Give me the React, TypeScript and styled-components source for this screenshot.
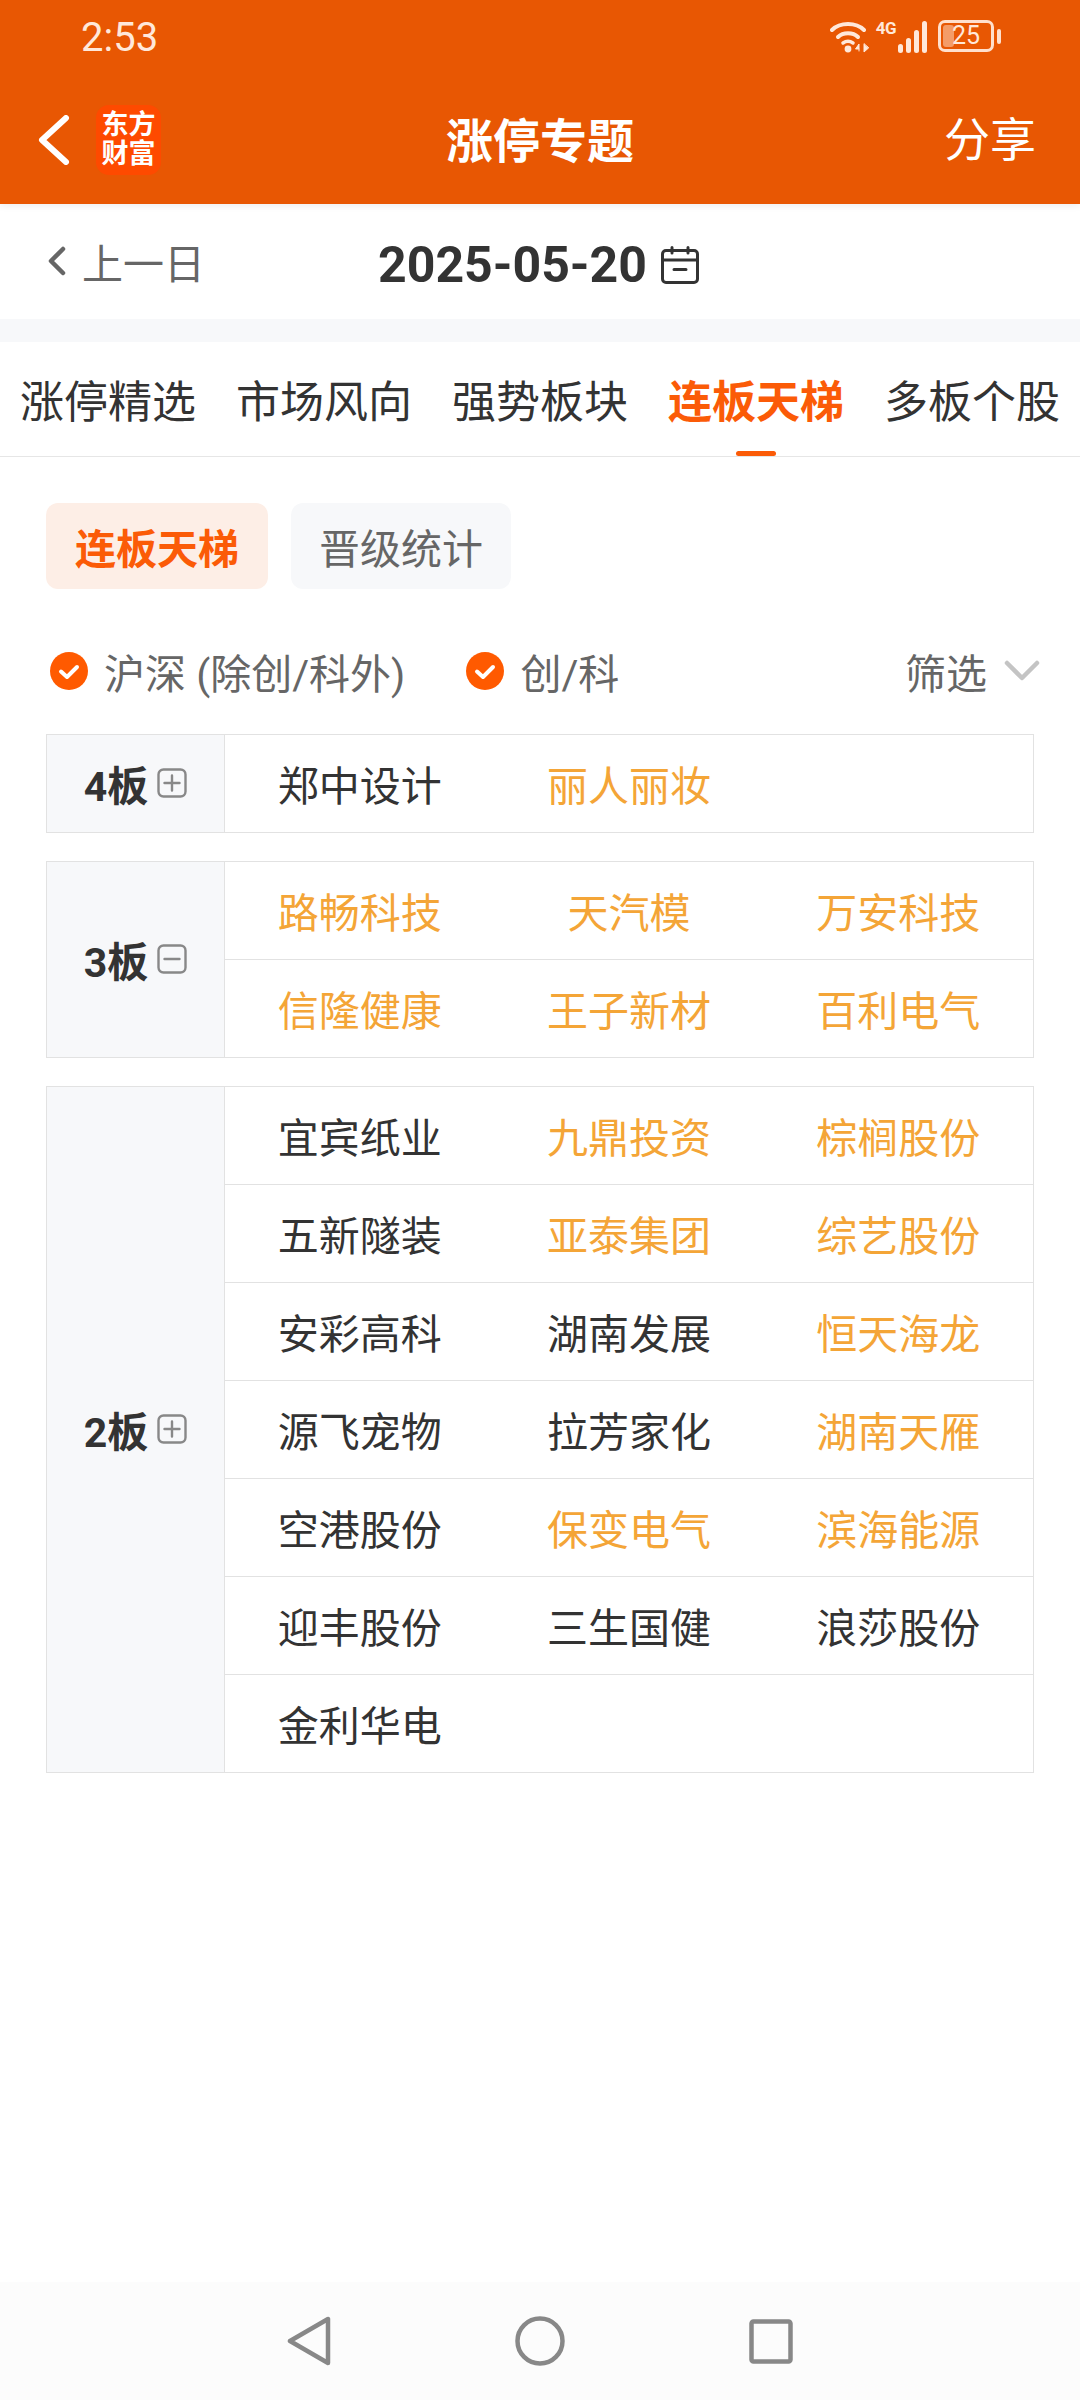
import React from 'react';
import styled, { createGlobalStyle } from 'styled-components';

const GlobalStyle = createGlobalStyle`
  html, body {
    margin: 0;
    padding: 0;
    background: #fff;
    font-family: Roboto, "Noto Sans CJK SC", "Noto Sans", sans-serif;
  }
  * {
    box-sizing: border-box;
  }
`;

const ORANGE = '#FB5B07';
const AMBER = '#F4A537';
const LINE = '#E2E2E2';

const Page = styled.div`
  width: 1080px;
  min-height: 2400px;
  display: flex;
  flex-direction: column;
  background: #fff;
`;

const Header = styled.header`
  height: 204px;
  background: #e85703;
  box-shadow: 0 2px 7px rgba(0, 0, 0, 0.07);
  position: relative;
  display: flex;
  flex-direction: column;
`;

const StatusBar = styled.div`
  height: 76px;
  padding: 0 80px 0 81px;
  display: flex;
  align-items: center;
  justify-content: space-between;
  color: #ffe8da;
`;

const Clock = styled.span`
  font-size: 40px;
  line-height: 76px;
`;

const StatusIcons = styled.div`
  display: flex;
  align-items: flex-start;
  height: 34px;
  margin-bottom: 3px;
`;

const NetworkType = styled.span`
  margin: -2px 2px 0 4px;
  font-size: 17px;
  line-height: 20px;
  font-weight: 700;
  letter-spacing: -0.5px;
  color: #ffe8da;
`;

const Battery = styled.div`
  width: 56px;
  height: 32px;
  margin: 0 6px 0 10px;
  border: 3px solid #ffe0cd;
  border-radius: 7px;
  position: relative;
  display: flex;
  align-items: center;
  justify-content: center;
  font-size: 25px;
  color: #ffe8da;
  &::before {
    content: '';
    position: absolute;
    left: 2px;
    top: 2px;
    bottom: 2px;
    width: 11px;
    border-radius: 3px;
    background: rgba(255, 225, 205, 0.5);
  }
  &::after {
    content: '';
    position: absolute;
    right: -10px;
    top: 6px;
    width: 4px;
    height: 15px;
    border-radius: 2px;
    background: #ffe0cd;
  }
`;

const NavRow = styled.div`
  flex: 1;
  display: grid;
  grid-template-columns: 1fr auto 1fr;
  align-items: center;
  padding: 0 44px;
  color: #fff;
`;

const NavLeft = styled.div`
  display: flex;
  align-items: center;
  gap: 26px;
  margin-left: -6px;
`;

const Logo = styled.div`
  width: 65px;
  height: 70px;
  border-radius: 13px;
  background: #fe4a00;
  color: #fff;
  font-size: 27px;
  line-height: 29px;
  font-weight: 700;
  text-align: center;
  display: flex;
  flex-direction: column;
  align-items: center;
  justify-content: center;
`;

const Title = styled.h1`
  margin: 0;
  padding-top: 4px;
  font-size: 47px;
  font-weight: 700;
  line-height: 64px;
`;

const Share = styled.span`
  justify-self: end;
  font-size: 46px;
  line-height: 64px;
`;

const DateBar = styled.div`
  height: 115px;
  padding: 6px 50px 0 47px;
  display: grid;
  grid-template-columns: 1fr auto 1fr;
  align-items: center;
`;

const PrevDay = styled.div`
  display: flex;
  align-items: center;
  gap: 15px;
  padding-bottom: 7px;
  font-size: 41px;
  color: #666;
`;

const DateValue = styled.div`
  display: flex;
  align-items: center;
  gap: 14px;
  font-size: 50px;
  font-weight: 700;
  color: #333;
`;

const Band = styled.div`
  height: 23px;
  background: #f7f8fa;
`;

const Tabs = styled.nav`
  height: 115px;
  padding: 0 20px;
  display: flex;
  gap: 40px;
  border-bottom: 1px solid #e6e6e6;
`;

const Tab = styled.div<{ $active?: boolean }>`
  position: relative;
  padding-top: 9px;
  font-size: 44px;
  line-height: 105px;
  white-space: nowrap;
  color: ${(p) => (p.$active ? ORANGE : '#333')};
  font-weight: ${(p) => (p.$active ? 700 : 400)};
  &::after {
    content: '';
    display: ${(p) => (p.$active ? 'block' : 'none')};
    position: absolute;
    left: 50%;
    bottom: 0;
    width: 40px;
    height: 5px;
    margin-left: -20px;
    border-radius: 3px;
    background: ${ORANGE};
  }
`;

const Content = styled.main`
  padding: 46px 46px 0;
`;

const Segments = styled.div`
  display: flex;
  gap: 23px;
`;

const Segment = styled.div<{ $active?: boolean }>`
  width: ${(p) => (p.$active ? 222 : 220)}px;
  height: 86px;
  border-radius: 12px;
  display: flex;
  align-items: center;
  justify-content: center;
  font-size: 41px;
  font-weight: ${(p) => (p.$active ? 700 : 400)};
  color: ${(p) => (p.$active ? ORANGE : '#666')};
  background: ${(p) => (p.$active ? '#FDEEE6' : '#F7F8FA')};
`;

const FilterRow = styled.div`
  height: 60px;
  margin: 52px 0 33px;
  display: flex;
  align-items: center;
`;

const Check = styled.div`
  display: flex;
  align-items: center;
  gap: 16px;
  margin-right: 57px;
  padding-left: 4px;
  font-size: 41px;
  color: #666;
`;

const FilterMenu = styled.div`
  margin-left: auto;
  margin-right: -6px;
  display: flex;
  align-items: center;
  gap: 17px;
  font-size: 41px;
  color: #666;
`;

const Group = styled.section`
  display: grid;
  grid-template-columns: 178px 1fr;
  border: 1px solid ${LINE};
  border-bottom: 0;
  margin-bottom: 28px;
`;

const GroupLabel = styled.div`
  display: flex;
  align-items: center;
  justify-content: center;
  gap: 9px;
  padding-bottom: 2px;
  font-size: 41px;
  font-weight: 700;
  color: #333;
  background: #f7f8fa;
  border-right: 1px solid ${LINE};
  border-bottom: 1px solid ${LINE};
`;

const Row = styled.div`
  height: 98px;
  display: grid;
  grid-template-columns: repeat(3, 1fr);
  border-bottom: 1px solid ${LINE};
`;

const Stock = styled.div<{ $hot?: boolean }>`
  display: flex;
  align-items: center;
  justify-content: center;
  padding-bottom: 2px;
  font-size: 41px;
  color: ${(p) => (p.$hot ? AMBER : '#333')};
`;

const Spacer = styled.div`
  flex: 1;
`;

const SystemNav = styled.footer`
  height: 118px;
  background: #fcfcfc;
  display: flex;
  align-items: center;
  justify-content: center;
  gap: 184px;
`;

const Wifi = () => (
  <svg width="42" height="34" viewBox="0 0 42 34" fill="none" stroke="#FFE8DA" strokeLinecap="round">
    <path d="M2 10C10 2 26 2 34 10" strokeWidth="4" />
    <path d="M8 17C13 12 23 12 28 17" strokeWidth="4" />
    <path d="M13 23C16 21 20 21 23 23" strokeWidth="3.5" />
    <circle cx="18" cy="29" r="3.4" fill="#FFE8DA" stroke="none" />
    <path d="M29 31V24L25.5 29H29M34 24V32L38.5 28Z" fill="#FFE8DA" strokeWidth="1" />
  </svg>
);

const Signal = () => (
  <svg width="30" height="34" viewBox="0 0 30 34" fill="#FFE8DA">
    <rect x="0" y="24" width="5" height="9" rx="2.5" />
    <rect x="8" y="18" width="5" height="15" rx="2.5" />
    <rect x="16" y="10" width="5" height="23" rx="2.5" />
    <rect x="24" y="1" width="5" height="32" rx="2.5" />
  </svg>
);

const BackArrow = () => (
  <svg width="32" height="50" viewBox="0 0 32 50" fill="none" stroke="#fff" strokeWidth="6" strokeLinecap="round" strokeLinejoin="round">
    <path d="M28 3L4 25L28 47" />
  </svg>
);

const SmallChevron = () => (
  <svg width="20" height="30" viewBox="0 0 20 30" fill="none" stroke="#666" strokeWidth="4.5" strokeLinecap="round" strokeLinejoin="round">
    <path d="M16 3L4 15L16 27" />
  </svg>
);

const CalendarIcon = () => (
  <svg width="38" height="38" viewBox="0 0 38 38" fill="none" stroke="#333" strokeWidth="3" strokeLinecap="round">
    <rect x="1.5" y="4.5" width="35" height="32" rx="3.5" />
    <path d="M1.5 14H36.5M11 1.5V7M27 1.5V7M13 23.5H25" />
  </svg>
);

const CheckIcon = () => (
  <svg width="38" height="38" viewBox="0 0 38 38">
    <circle cx="19" cy="19" r="19" fill="#FF5A00" />
    <path d="M11 19.5L17 25L27 15" fill="none" stroke="#fff" strokeWidth="4" strokeLinecap="round" strokeLinejoin="round" />
  </svg>
);

const ChevronDown = () => (
  <svg width="36" height="24" viewBox="0 0 36 24" fill="none" stroke="#C4C4C4" strokeWidth="4.5" strokeLinecap="round" strokeLinejoin="round">
    <path d="M3 4L18 19L33 4" />
  </svg>
);

const ToggleBox = ({ open }: { open?: boolean }) => (
  <svg width="30" height="30" viewBox="0 0 30 30" fill="none" stroke="#888" strokeWidth="2.4" strokeLinecap="round">
    <rect x="1.5" y="1.5" width="27" height="27" rx="5" />
    <path d={open ? 'M7.5 15H22.5' : 'M7.5 15H22.5M15 7.5V22.5'} />
  </svg>
);

const NavBack = () => (
  <svg width="44" height="50" viewBox="0 0 44 50" fill="none" stroke="#888" strokeWidth="4.5" strokeLinejoin="round">
    <path d="M41 3V47L3 25Z" />
  </svg>
);

const NavHome = () => (
  <svg width="50" height="50" viewBox="0 0 50 50" fill="none" stroke="#888" strokeWidth="4.5">
    <circle cx="25" cy="25" r="22.5" />
  </svg>
);

const NavRecent = () => (
  <svg width="44" height="45" viewBox="0 0 44 45" fill="none" stroke="#888" strokeWidth="4.5" strokeLinejoin="round">
    <rect x="2.5" y="2.5" width="39" height="40" rx="2" />
  </svg>
);

const tabs = ['涨停精选', '市场风向', '强势板块', '连板天梯', '多板个股'];

type StockItem = [string, boolean];

const groups: { label: string; open?: boolean; rows: StockItem[][] }[] = [
  {
    label: '4板',
    rows: [[['郑中设计', false], ['丽人丽妆', true]]],
  },
  {
    label: '3板',
    open: true,
    rows: [
      [['路畅科技', true], ['天汽模', true], ['万安科技', true]],
      [['信隆健康', true], ['王子新材', true], ['百利电气', true]],
    ],
  },
  {
    label: '2板',
    rows: [
      [['宜宾纸业', false], ['九鼎投资', true], ['棕榈股份', true]],
      [['五新隧装', false], ['亚泰集团', true], ['综艺股份', true]],
      [['安彩高科', false], ['湖南发展', false], ['恒天海龙', true]],
      [['源飞宠物', false], ['拉芳家化', false], ['湖南天雁', true]],
      [['空港股份', false], ['保变电气', true], ['滨海能源', true]],
      [['迎丰股份', false], ['三生国健', false], ['浪莎股份', false]],
      [['金利华电', false]],
    ],
  },
];

export default function App() {
  return (
    <Page>
      <GlobalStyle />
      <Header>
        <StatusBar>
          <Clock>2:53</Clock>
          <StatusIcons>
            <Wifi />
            <NetworkType>4G</NetworkType>
            <Signal />
            <Battery>25</Battery>
          </StatusIcons>
        </StatusBar>
        <NavRow>
          <NavLeft>
            <BackArrow />
            <Logo>
              <span>东方</span>
              <span>财富</span>
            </Logo>
          </NavLeft>
          <Title>涨停专题</Title>
          <Share>分享</Share>
        </NavRow>
      </Header>

      <DateBar>
        <PrevDay>
          <SmallChevron />
          上一日
        </PrevDay>
        <DateValue>
          2025-05-20
          <CalendarIcon />
        </DateValue>
      </DateBar>
      <Band />

      <Tabs>
        {tabs.map((t) => (
          <Tab key={t} $active={t === '连板天梯'}>
            {t}
          </Tab>
        ))}
      </Tabs>

      <Content>
        <Segments>
          <Segment $active>连板天梯</Segment>
          <Segment>晋级统计</Segment>
        </Segments>

        <FilterRow>
          <Check>
            <CheckIcon />
            沪深 (除创/科外)
          </Check>
          <Check>
            <CheckIcon />
            创/科
          </Check>
          <FilterMenu>
            筛选
            <ChevronDown />
          </FilterMenu>
        </FilterRow>

        {groups.map((g) => (
          <Group key={g.label}>
            <GroupLabel>
              {g.label}
              <ToggleBox open={g.open} />
            </GroupLabel>
            <div>
              {g.rows.map((row, i) => (
                <Row key={i}>
                  {row.map(([name, hot]) => (
                    <Stock key={name} $hot={hot}>
                      {name}
                    </Stock>
                  ))}
                </Row>
              ))}
            </div>
          </Group>
        ))}
      </Content>

      <Spacer />
      <SystemNav>
        <NavBack />
        <NavHome />
        <NavRecent />
      </SystemNav>
    </Page>
  );
}
